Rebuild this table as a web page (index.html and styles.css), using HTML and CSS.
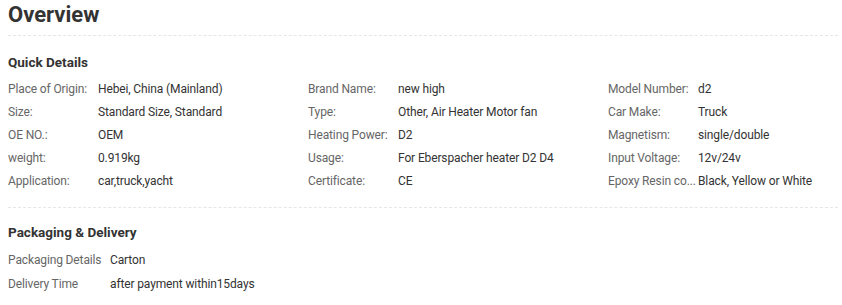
FILE: index.html
```html
<!DOCTYPE html>
<html>
<head>
<meta charset="utf-8">
<link rel="stylesheet" href="styles.css">
</head>
<body>
<div class="page">
  <h1 class="title">Overview</h1>
  <section class="section">
    <h2 class="sub">Quick Details</h2>
    <div class="grid">
      <div class="item"><span class="label">Place of Origin:</span><span class="value">Hebei, China (Mainland)</span></div>
      <div class="item"><span class="label">Brand Name:</span><span class="value">new high</span></div>
      <div class="item"><span class="label">Model Number:</span><span class="value">d2</span></div>
      <div class="item"><span class="label">Size:</span><span class="value">Standard Size, Standard</span></div>
      <div class="item"><span class="label">Type:</span><span class="value">Other, Air Heater Motor fan</span></div>
      <div class="item"><span class="label">Car Make:</span><span class="value">Truck</span></div>
      <div class="item"><span class="label">OE NO.:</span><span class="value">OEM</span></div>
      <div class="item"><span class="label">Heating Power:</span><span class="value">D2</span></div>
      <div class="item"><span class="label">Magnetism:</span><span class="value">single/double</span></div>
      <div class="item"><span class="label">weight:</span><span class="value">0.919kg</span></div>
      <div class="item"><span class="label">Usage:</span><span class="value">For Eberspacher heater D2 D4</span></div>
      <div class="item"><span class="label">Input Voltage:</span><span class="value">12v/24v</span></div>
      <div class="item"><span class="label">Application:</span><span class="value">car,truck,yacht</span></div>
      <div class="item"><span class="label">Certificate:</span><span class="value">CE</span></div>
      <div class="item"><span class="label">Epoxy Resin co...</span><span class="value">Black, Yellow or White</span></div>
    </div>
  </section>
  <section class="section last">
    <h2 class="sub">Packaging &amp; Delivery</h2>
    <div class="list">
      <div class="item tall"><span class="label wide">Packaging Details</span><span class="value">Carton</span></div>
      <div class="item tall"><span class="label wide">Delivery Time</span><span class="value">after payment within15days</span></div>
    </div>
  </section>
</div>
</body>
</html>
```
FILE: styles.css
```css
html, body {
  margin: 0;
  padding: 0;
  background: #fff;
}
body {
  font-family: Roboto, "Liberation Sans", sans-serif;
  color: #333;
}
.page {
  width: 830px;
  padding: 0 4px 0 8px;
}
.title {
  margin: 0;
  font-size: 22px;
  font-weight: 700;
  line-height: 30px;
  height: 35px;
  color: #333;
  border-bottom: 1px dashed #e6e6e6;
}
.section {
  padding: 16px 0 14px;
  border-bottom: 1px dashed #e6e6e6;
}
.section.last {
  padding-top: 14px;
  border-bottom: none;
}
.sub {
  margin: 0 0 6px;
  font-size: 13.5px;
  font-weight: 700;
  line-height: 20px;
  color: #333;
}
.grid {
  display: grid;
  grid-template-columns: 300px 300px 230px;
}
.item {
  display: flex;
  font-size: 12px;
  line-height: 23px;
  letter-spacing: -0.13px;
  white-space: nowrap;
}
.item.tall {
  line-height: 24px;
}
.label {
  width: 90px;
  flex: none;
  color: #666;
}
.label.wide {
  width: 102px;
}
.value {
  color: #333;
}
```
